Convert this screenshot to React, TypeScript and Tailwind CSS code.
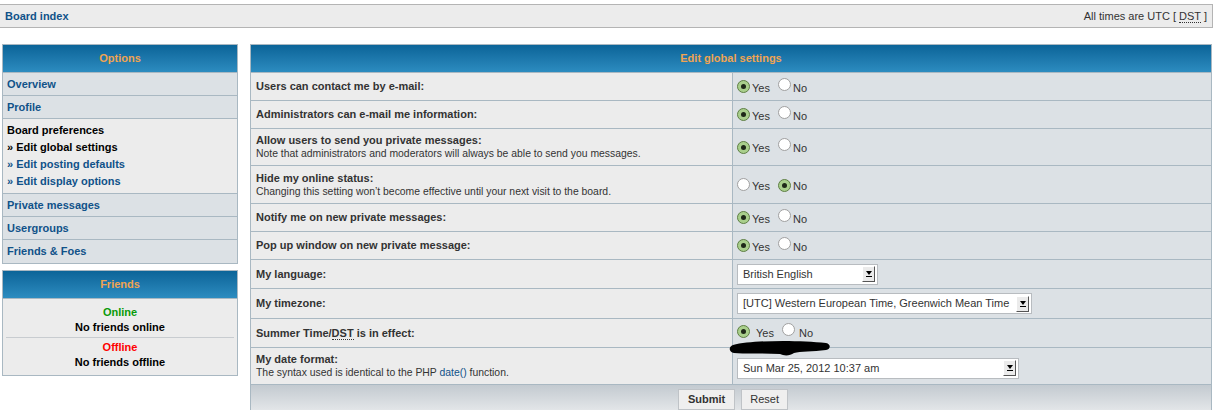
import React from "react";

const link = "text-[#105289]";

interface RowProps {
  label: React.ReactNode;
  explain?: React.ReactNode;
  h: string;
  children: React.ReactNode;
}

const Radio = ({ checked }: { checked: boolean }) =>
  checked ? (
    <span className="inline-flex w-[13px] h-[13px] rounded-full border border-[#5f7f45] bg-[#a9cf8c] items-center justify-center">
      <span className="w-[5px] h-[5px] rounded-full bg-[#1e2818]" />
    </span>
  ) : (
    <span className="inline-block w-[13px] h-[13px] rounded-full border border-[#a0a0a0] bg-white" />
  );

const YesNo = ({ yes }: { yes: boolean }) => (
  <div className="flex items-center text-[11px] text-[#333]">
    <Radio checked={yes} />
    <span className="ml-[2px] mt-[3px]">Yes</span>
    <span className="ml-[8px]"><Radio checked={!yes} /></span>
    <span className="ml-[2px] mt-[3px]">No</span>
  </div>
);

const Select = ({ value, w }: { value: string; w: string }) => (
  <div className={`${w} h-[21px] bg-white border border-[#b8bcc0] flex items-center justify-between pl-[5px] pr-[2px] text-[11px] text-[#333]`}>
    <span>{value}</span>
    <span className="w-[13px] h-[16px] bg-[#ebebeb] border-t border-l border-t-white border-l-white border-r border-b border-r-[#555] border-b-[#555] flex flex-col items-center justify-center">
      <span className="w-0 h-0 border-l-[3px] border-r-[3px] border-t-[4px] border-l-transparent border-r-transparent border-t-black" />
      <span className="w-[6px] h-px bg-black mt-[1px]" />
    </span>
  </div>
);

const Row = ({ label, explain, h, children }: RowProps) => (
  <>
    <div className={`${h} bg-[#ececec] px-[5px] flex flex-col justify-center`}>
      <div className="text-[11px] font-bold text-[#333] leading-[13px]">{label}</div>
      {explain && <div className="text-[10.4px] text-[#333] leading-[13px]">{explain}</div>}
    </div>
    <div className={`${h} bg-[#dce1e5] px-[4px] flex items-center`}>{children}</div>
  </>
);

const Dst = () => (
  <span className="border-b border-dotted border-[#333]">DST</span>
);

const PanelHead = ({ title }: { title: string }) => (
  <div className="h-[27px] bg-gradient-to-b from-[#0a6498] to-[#2c8cc0] flex items-center justify-center text-[11px] font-bold text-[#f0a452]">
    {title}
  </div>
);

const NavItem = ({ children }: { children: React.ReactNode }) => (
  <div className={`h-[22px] bg-[#dce1e5] px-[4px] flex items-center text-[11px] font-bold ${link}`}>
    {children}
  </div>
);

export default function App() {
  return (
    <div className="relative w-[1215px] h-[410px] overflow-hidden bg-white font-['Liberation_Sans',Arial,sans-serif]">
      {/* breadcrumb bar */}
      <div className="mt-[4px] mr-[2px] h-[24px] bg-[#ececec] border-y border-r border-[#b4b4b4] flex items-center justify-between pl-[5px] pr-[5px] text-[11px]">
        <span className={`font-bold ${link}`}>Board index</span>
        <span className="text-[#333]">
          All times are UTC [ <Dst /> ]
        </span>
      </div>

      <div className="flex items-start mt-[16px] pl-[2px]">
        {/* left column */}
        <div className="w-[236px] flex flex-col gap-[6px]">
          <div className="border border-[#a9b8c2] bg-[#a9b8c2] flex flex-col gap-px">
            <PanelHead title="Options" />
            <NavItem>Overview</NavItem>
            <NavItem>Profile</NavItem>
            <div className="h-[74px] bg-[#ececec] px-[4px] flex flex-col justify-center gap-[4px] text-[11px] font-bold leading-[13px]">
              <div className="text-black">Board preferences</div>
              <div className="text-black">» Edit global settings</div>
              <div className={link}>» Edit posting defaults</div>
              <div className={link}>» Edit display options</div>
            </div>
            <NavItem>Private messages</NavItem>
            <NavItem>Usergroups</NavItem>
            <div className={`h-[23px] bg-[#dce1e5] px-[4px] flex items-center text-[11px] font-bold ${link}`}>
              Friends &amp; Foes
            </div>
          </div>

          <div className="border border-[#a9b8c2] bg-[#a9b8c2] flex flex-col gap-px">
            <PanelHead title="Friends" />
            <div className="h-[76px] bg-[#ececec] flex flex-col items-center justify-center text-[11px] font-bold leading-[15px]">
              <div className="text-[#0a9a0a]">Online</div>
              <div className="text-black">No friends online</div>
              <div className="w-[228px] h-px bg-[#c8ccd0] my-[2px]" />
              <div className="text-[#ff0000]">Offline</div>
              <div className="text-black">No friends offline</div>
            </div>
          </div>
        </div>

        {/* main settings table */}
        <div className="ml-[12px] w-[962px] border border-[#a9b8c2] bg-[#a9b8c2]">
          <PanelHead title="Edit global settings" />
          <div className="mt-px grid grid-cols-[481px_1fr] gap-px">
            <Row label="Users can contact me by e-mail:" h="h-[27px]">
              <YesNo yes />
            </Row>
            <Row label="Administrators can e-mail me information:" h="h-[27px]">
              <YesNo yes />
            </Row>
            <Row
              label="Allow users to send you private messages:"
              explain="Note that administrators and moderators will always be able to send you messages."
              h="h-[36px]"
            >
              <YesNo yes />
            </Row>
            <Row
              label="Hide my online status:"
              explain="Changing this setting won’t become effective until your next visit to the board."
              h="h-[37px]"
            >
              <YesNo yes={false} />
            </Row>
            <Row label="Notify me on new private messages:" h="h-[27px]">
              <YesNo yes />
            </Row>
            <Row label="Pop up window on new private message:" h="h-[27px]">
              <YesNo yes />
            </Row>
            <Row label="My language:" h="h-[28px]">
              <Select value="British English" w="w-[141px]" />
            </Row>
            <Row label="My timezone:" h="h-[29px]">
              <Select value="[UTC] Western European Time, Greenwich Mean Time" w="w-[295px]" />
            </Row>
            <Row
              label={
                <>
                  Summer Time/<Dst /> is in effect:
                </>
              }
              h="h-[28px]"
            >
              <div className="flex items-center text-[11px] text-[#333] -mt-[3px]">
                <Radio checked />
                <span className="ml-[6px] mt-[3px]">Yes</span>
                <span className="ml-[8px]"><Radio checked={false} /></span>
                <span className="ml-[4px] mt-[3px]">No</span>
              </div>
            </Row>
            <Row
              label="My date format:"
              explain={
                <>
                  The syntax used is identical to the PHP <span className={link}>date()</span> function.
                </>
              }
              h="h-[36px]"
            >
              <div className="mt-[4px]">
                <Select value="Sun Mar 25, 2012 10:37 am" w="w-[282px]" />
              </div>
            </Row>
          </div>
          <div className="mt-px h-[30px] bg-gradient-to-b from-[#c3cad0] to-[#e9ebed] flex items-start justify-center gap-[6px] pt-[4px] pl-[4px]">
            <button className="h-[21px] px-[9px] bg-[#efefef] border border-[#bfc3c7] text-[11px] font-bold text-[#333]">
              Submit
            </button>
            <button className="h-[21px] px-[8px] bg-[#efefef] border border-[#bfc3c7] text-[11px] text-[#333]">
              Reset
            </button>
          </div>
        </div>
      </div>

      {/* redaction scribble over the table */}
      <svg className="absolute left-[728px] top-[338px]" width="104" height="19" viewBox="0 0 104 19">
        <path
          d="M5 7 C 25 2, 70 2, 98 5 C 103 6, 103 11, 98 12 C 85 14, 72 13, 66 15 C 62 18, 56 18, 52 16 C 35 15, 15 16, 6 15 C 1 14, 0 9, 5 7 Z"
          fill="#000"
        />
      </svg>
    </div>
  );
}
